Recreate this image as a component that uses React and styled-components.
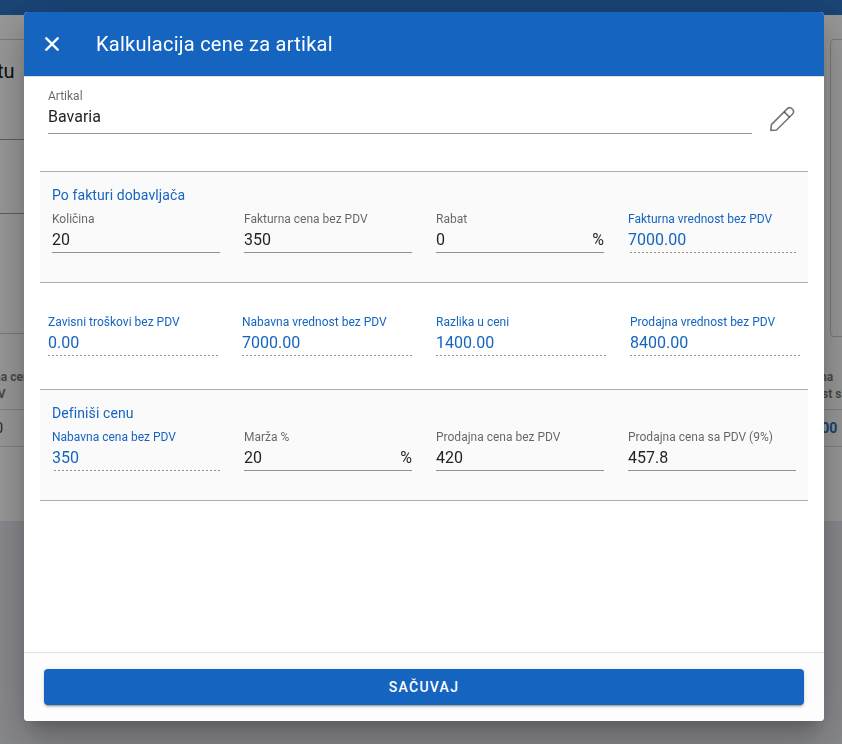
import React, { useId, useState } from 'react';
import styled, { createGlobalStyle } from 'styled-components';

const GlobalStyle = createGlobalStyle`
  * {
    box-sizing: border-box;
  }

  body {
    margin: 0;
    font-family: Roboto, "Liberation Sans", sans-serif;
    color: rgba(0, 0, 0, 0.87);
    background-color: #e3e4ec;
  }
`;

const Page = styled.div`
  min-height: 100vh;
  overflow: hidden;
`;

const AppBar = styled.header`
  height: 15px;
  background-color: #1565c0;
`;

const Document = styled.main`
  padding: 24px 0 74px;
  background-color: white;
`;

const Panels = styled.div`
  display: flex;
  align-items: flex-start;
  justify-content: space-between;
`;

const InvoicePanel = styled.section`
  flex: 1;
  height: 295px;
  margin: 0 24px 0 -3px;
  padding-top: 19px;
  border: 1px solid rgba(0, 0, 0, 0.22);
  border-left: none;
`;

const PanelTitle = styled.h2`
  margin: 0;
  font-size: 20px;
  font-weight: 400;
  line-height: 24px;
  color: black;
`;

const PanelLine = styled.div`
  height: ${props => (props.$first ? 57 : 74)}px;
  border-bottom: 1px solid rgba(0, 0, 0, 0.42);
`;

const SidePanel = styled.section`
  width: 12px;
  height: 298px;
  border: 1px solid rgba(0, 0, 0, 0.22);
  border-right: none;
  border-radius: 4px 0 0 4px;
`;

const ItemsWrap = styled.div`
  margin: 24px -129px 0 -56px;
`;

const Items = styled.table`
  width: 100%;
  table-layout: fixed;
  border-collapse: separate;
  border-spacing: 0;
  text-align: left;
`;

const HeadCell = styled.th`
  width: ${props => props.$width || 'auto'};
  height: 49px;
  padding: 2px 16px 0;
  font-size: 12px;
  line-height: 17px;
  font-weight: 700;
  color: rgba(0, 0, 0, 0.6);
  border-bottom: 1px solid rgba(0, 0, 0, 0.16);
`;

const Cell = styled.td`
  height: 37px;
  padding: 0 16px;
  font-size: 14px;
  font-weight: ${props => (props.$total ? 700 : 400)};
  color: ${props => (props.$total ? '#1565c0' : 'rgba(0, 0, 0, 0.87)')};
  border-bottom: 1px solid rgba(0, 0, 0, 0.16);
`;

const Overlay = styled.div`
  position: fixed;
  z-index: 1;
  top: 0;
  left: 0;
  right: 0;
  bottom: 0;
  display: flex;
  justify-content: center;
  padding: 12px 18px 23px 24px;
  overflow: auto;
  background-color: rgba(33, 33, 33, 0.46);
`;

const Dialog = styled.form`
  display: flex;
  flex-direction: column;
  width: 100%;
  background-color: white;
  border-radius: 4px;
  overflow: hidden;
  box-shadow: 0 11px 15px -7px rgba(0, 0, 0, 0.2),
    0 24px 38px 3px rgba(0, 0, 0, 0.14), 0 9px 46px 8px rgba(0, 0, 0, 0.12);
`;

const Toolbar = styled.div`
  display: flex;
  flex-shrink: 0;
  align-items: center;
  height: 64px;
  padding: 0 16px;
  color: white;
  background-color: #1565c0;
`;

const IconButton = styled.button`
  display: flex;
  flex-shrink: 0;
  padding: 0;
  border: none;
  background: none;
  color: inherit;
  cursor: pointer;
`;

const Title = styled.h1`
  margin: 0 0 0 32px;
  font-size: 20px;
  font-weight: 400;
  line-height: 30px;
  letter-spacing: 0.0125em;
`;

const Body = styled.div`
  flex: 1;
  padding: 11px 16px 24px;
  border-top: 1px solid #e0e0e0;
  border-bottom: 1px solid #e0e0e0;
`;

const ArticleRow = styled.div`
  display: flex;
  align-items: center;
  gap: 17px;
  margin-bottom: 37px;
  padding: 0 12px 0 8px;
`;

const EditButton = styled(IconButton)`
  margin-top: 16px;
  color: rgba(0, 0, 0, 0.54);
`;

const Section = styled.section`
  padding: 12px 12px 29px;
  background-color: #fafafa;
  border-top: 1px solid rgba(0, 0, 0, 0.3);
  border-bottom: 1px solid rgba(0, 0, 0, 0.3);
`;

const SectionTitle = styled.h2`
  margin: 0 0 5px;
  font-size: 14px;
  font-weight: 400;
  line-height: 22px;
  letter-spacing: 0.007em;
  color: #1565c0;
`;

const Totals = styled.section`
  padding: 31px 8px 33px;
`;

const Grid = styled.div`
  display: grid;
  grid-template-columns: repeat(4, minmax(0, 1fr));
  column-gap: 24px;
`;

const FieldBox = styled.div`
  flex: 1;
  min-width: 0;
  color: ${props => (props.$computed ? '#1565c0' : 'rgba(0, 0, 0, 0.87)')};
`;

const Label = styled.label`
  display: block;
  font-size: 12px;
  line-height: 16px;
  white-space: nowrap;
  color: ${props => (props.$computed ? '#1565c0' : 'rgba(0, 0, 0, 0.6)')};
`;

const Control = styled.div`
  display: flex;
  align-items: center;
  padding-bottom: ${props => (props.$tall ? 4 : 0)}px;
`;

const Line = styled.div`
  height: 1px;
  background: ${props =>
    props.$computed
      ? 'linear-gradient(90deg, transparent 2px, rgba(0, 0, 0, 0.42) 2px) right / 4px 1px repeat-x'
      : 'rgba(0, 0, 0, 0.42)'};
`;

const Input = styled.input`
  flex: 1;
  min-width: 0;
  height: 25px;
  padding: 0;
  border: none;
  outline: none;
  background: none;
  font: inherit;
  font-size: 16px;
  color: inherit;
`;

const Suffix = styled.span`
  font-size: 16px;
  line-height: 24px;
`;

const Footer = styled.div`
  flex-shrink: 0;
  padding: 16px 20px;
  background-color: #fdfdfd;
`;

const SaveButton = styled.button`
  display: block;
  width: 100%;
  height: 36px;
  border: none;
  border-radius: 4px;
  font-family: inherit;
  font-size: 14px;
  font-weight: 500;
  letter-spacing: 0.09em;
  text-transform: uppercase;
  color: white;
  background-color: #1565c0;
  box-shadow: 0 3px 1px -2px rgba(0, 0, 0, 0.2),
    0 2px 2px 0 rgba(0, 0, 0, 0.14), 0 1px 5px 0 rgba(0, 0, 0, 0.12);
  cursor: pointer;
`;

const CloseIcon = () => (
  <svg width="24" height="24" viewBox="0 0 24 24" fill="currentColor">
    <path
      stroke="currentColor"
      strokeWidth="0.4"
      d="M19 6.41 17.59 5 12 10.59 6.41 5 5 6.41 10.59 12 5 17.59 6.41 19 12 13.41 17.59 19 19 17.59 13.41 12Z"
    />
  </svg>
);

const PencilIcon = () => (
  <svg
    width="27"
    height="27"
    viewBox="0 0 27 27"
    fill="none"
    stroke="currentColor"
    strokeWidth="1.6"
    strokeLinejoin="round"
  >
    <path d="M2.4 18.6 18.1 2.9a3.75 3.75 0 0 1 5.3 5.3L7.5 24 1.8 24.5Z" />
    <path d="m15.2 5.9 5.2 5.2" />
  </svg>
);

const Field = ({ label, initial, suffix, computed, tall }) => {
  const id = useId();
  const [value, setValue] = useState(initial);
  return (
    <FieldBox $computed={computed}>
      <Label htmlFor={id} $computed={computed}>
        {label}
      </Label>
      <Control $tall={tall}>
        <Input
          id={id}
          type="text"
          value={value}
          readOnly={computed}
          onChange={e => {
            setValue(e.target.value);
          }}
        />
        {suffix && <Suffix>{suffix}</Suffix>}
      </Control>
      <Line $computed={computed} />
    </FieldBox>
  );
};

const InvoicePage = () => (
  <Page>
    <AppBar />
    <Document>
      <Panels>
        <InvoicePanel>
          <PanelTitle>tu</PanelTitle>
          <PanelLine $first />
          <PanelLine />
        </InvoicePanel>
        <SidePanel />
      </Panels>
      <ItemsWrap>
        <Items>
          <thead>
            <tr>
              <HeadCell>
                Nabavna cena
                <br />
                bez PDV
              </HeadCell>
              <HeadCell $width="202px">
                Prodajna
                <br />
                vrednost sa PDV
              </HeadCell>
            </tr>
          </thead>
          <tbody>
            <tr>
              <Cell>350.00</Cell>
              <Cell $total>8400.00</Cell>
            </tr>
          </tbody>
        </Items>
      </ItemsWrap>
    </Document>
  </Page>
);

const PriceDialog = () => (
  <Overlay>
    <Dialog
      role="dialog"
      aria-labelledby="dialog-title"
      onSubmit={e => {
        e.preventDefault();
      }}
    >
      <Toolbar>
        <IconButton type="button" aria-label="Zatvori">
          <CloseIcon />
        </IconButton>
        <Title id="dialog-title">Kalkulacija cene za artikal</Title>
      </Toolbar>
      <Body>
        <ArticleRow>
          <Field label="Artikal" initial="Bavaria" tall />
          <EditButton type="button" aria-label="Izmeni artikal">
            <PencilIcon />
          </EditButton>
        </ArticleRow>
        <Section>
          <SectionTitle>Po fakturi dobavljača</SectionTitle>
          <Grid>
            <Field label="Količina" initial="20" />
            <Field label="Fakturna cena bez PDV" initial="350" />
            <Field label="Rabat" initial="0" suffix="%" />
            <Field label="Fakturna vrednost bez PDV" initial="7000.00" computed />
          </Grid>
        </Section>
        <Totals>
          <Grid>
            <Field label="Zavisni troškovi bez PDV" initial="0.00" computed />
            <Field label="Nabavna vrednost bez PDV" initial="7000.00" computed />
            <Field label="Razlika u ceni" initial="1400.00" computed />
            <Field label="Prodajna vrednost bez PDV" initial="8400.00" computed />
          </Grid>
        </Totals>
        <Section>
          <SectionTitle>Definiši cenu</SectionTitle>
          <Grid>
            <Field label="Nabavna cena bez PDV" initial="350" computed />
            <Field label="Marža %" initial="20" suffix="%" />
            <Field label="Prodajna cena bez PDV" initial="420" />
            <Field label="Prodajna cena sa PDV (9%)" initial="457.8" />
          </Grid>
        </Section>
      </Body>
      <Footer>
        <SaveButton type="submit">Sačuvaj</SaveButton>
      </Footer>
    </Dialog>
  </Overlay>
);

const App = () => (
  <>
    <GlobalStyle />
    <InvoicePage />
    <PriceDialog />
  </>
);

export default App;
